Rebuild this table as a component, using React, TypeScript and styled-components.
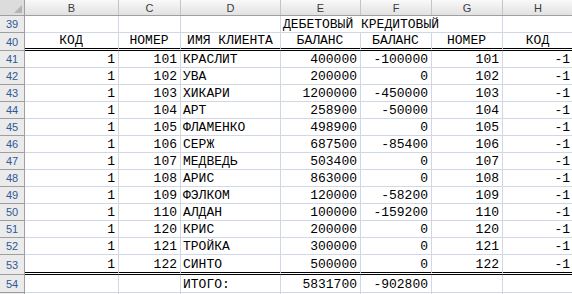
import React from 'react';
import styled, { createGlobalStyle } from 'styled-components';

const GlobalStyle = createGlobalStyle`
  html, body {
    margin: 0;
    padding: 0;
    background: #fff;
    overflow: hidden;
  }
`;

const COLUMNS = '25px 94px 62px 100px 80px 71px 71px 71px';
const GRID_LINE = '#d0d7e5';
const HEAD_LINE = '#9f9f9f';

type Align = 'left' | 'right' | 'center';
type Bottom = 'grid' | 'double';

const rows: (string | number)[][] = [
  [1, 101, 'КРАСЛИТ', 400000, -100000, 101, -1],
  [1, 102, 'УВА', 200000, 0, 102, -1],
  [1, 103, 'ХИКАРИ', 1200000, -450000, 103, -1],
  [1, 104, 'АРТ', 258900, -50000, 104, -1],
  [1, 105, 'ФЛАМЕНКО', 498900, 0, 105, -1],
  [1, 106, 'СЕРЖ', 687500, -85400, 106, -1],
  [1, 107, 'МЕДВЕДЬ', 503400, 0, 107, -1],
  [1, 108, 'АРИС', 863000, 0, 108, -1],
  [1, 109, 'ФЭЛКОМ', 120000, -58200, 109, -1],
  [1, 110, 'АЛДАН', 100000, -159200, 110, -1],
  [1, 120, 'КРИС', 200000, 0, 120, -1],
  [1, 121, 'ТРОЙКА', 300000, 0, 121, -1],
  [1, 122, 'СИНТО', 500000, 0, 122, -1],
];

const App = () => {
  return (
    <>
      <GlobalStyle />
      <Sheet>
        <HeaderRow>
          <Corner />
          {['B', 'C', 'D', 'E', 'F', 'G', 'H'].map((c) => (
            <ColHead key={c}>{c}</ColHead>
          ))}
        </HeaderRow>

        <Row $h={17}>
          <RowHead>39</RowHead>
          <Cell />
          <Cell />
          <Cell />
          <Cell $span={3} $align="left">
            ДЕБЕТОВЫЙ КРЕДИТОВЫЙ
          </Cell>
          <Cell />
        </Row>

        <Row $h={18}>
          <RowHead>40</RowHead>
          {['КОД', 'НОМЕР', 'ИМЯ КЛИЕНТА', 'БАЛАНС', 'БАЛАНС', 'НОМЕР', 'КОД'].map((t, i) => (
            <Cell key={i} $align="center" $bottom="double">
              {t}
            </Cell>
          ))}
        </Row>

        {rows.map((r, i) => {
          const last = i === rows.length - 1;
          return (
            <Row key={i} $h={last ? 20 : 17}>
              <RowHead>{41 + i}</RowHead>
              {r.map((v, j) => (
                <Cell key={j} $align={j === 2 ? 'left' : 'right'} $bottom={last ? 'double' : 'grid'}>
                  {v}
                </Cell>
              ))}
            </Row>
          );
        })}

        <Row $h={18}>
          <RowHead>54</RowHead>
          <Cell />
          <Cell />
          <Cell $align="left">ИТОГО:</Cell>
          <Cell $align="right">5831700</Cell>
          <Cell $align="right">-902800</Cell>
          <Cell />
          <Cell />
        </Row>

        {/* only a sliver of row 55 is visible at the bottom edge */}
        <Row $h={2}>
          <RowHead />
          <Cell />
          <Cell />
          <Cell />
          <Cell />
          <Cell />
          <Cell />
          <Cell />
        </Row>
      </Sheet>
    </>
  );
};

export default App;

const Sheet = styled.div`
  width: 574px;
  display: flex;
  flex-direction: column;
  font-family: 'Liberation Mono', 'Courier New', monospace;
  font-size: 13px;
  color: #000;
`;

const HeaderRow = styled.div`
  display: grid;
  grid-template-columns: ${COLUMNS};
  height: 16px;
  box-sizing: border-box;
  border-bottom: 1px solid ${HEAD_LINE};
  background: linear-gradient(180deg, #f9f9f9 0%, #ececec 55%, #e2e2e2 100%);
`;

const Corner = styled.div`
  position: relative;
  border-right: 1px solid ${HEAD_LINE};
  background: #dcdcdc;

  &::after {
    content: '';
    position: absolute;
    right: 2px;
    bottom: 2px;
    width: 0;
    height: 0;
    border-left: 8px solid transparent;
    border-bottom: 8px solid #b4b4b4;
  }
`;

const ColHead = styled.div`
  display: flex;
  align-items: center;
  justify-content: center;
  border-right: 1px solid #c5c5c5;
  font-family: 'Liberation Sans', Arial, sans-serif;
  font-size: 11px;
  color: #3c3c3c;
`;

const Row = styled.div<{ $h: number }>`
  display: grid;
  grid-template-columns: ${COLUMNS};
  height: ${({ $h }) => $h}px;
`;

const RowHead = styled.div`
  display: flex;
  align-items: center;
  justify-content: center;
  box-sizing: border-box;
  border-right: 1px solid ${HEAD_LINE};
  border-bottom: 1px solid ${HEAD_LINE};
  background: #ebebeb;
  font-family: 'Liberation Sans', Arial, sans-serif;
  font-size: 11px;
  color: #2f5a96;
`;

const Cell = styled.div<{ $align?: Align; $bottom?: Bottom; $span?: number }>`
  grid-column: span ${({ $span }) => $span ?? 1};
  display: flex;
  align-items: flex-end;
  justify-content: ${({ $align }) =>
    $align === 'right' ? 'flex-end' : $align === 'center' ? 'center' : 'flex-start'};
  box-sizing: border-box;
  padding: 0 3px 0 2px;
  border-right: 1px solid ${GRID_LINE};
  border-bottom: ${({ $bottom }) => ($bottom === 'double' ? '3px double #000' : `1px solid ${GRID_LINE}`)};
  line-height: 15px;
  white-space: pre;
  overflow: visible;
`;
